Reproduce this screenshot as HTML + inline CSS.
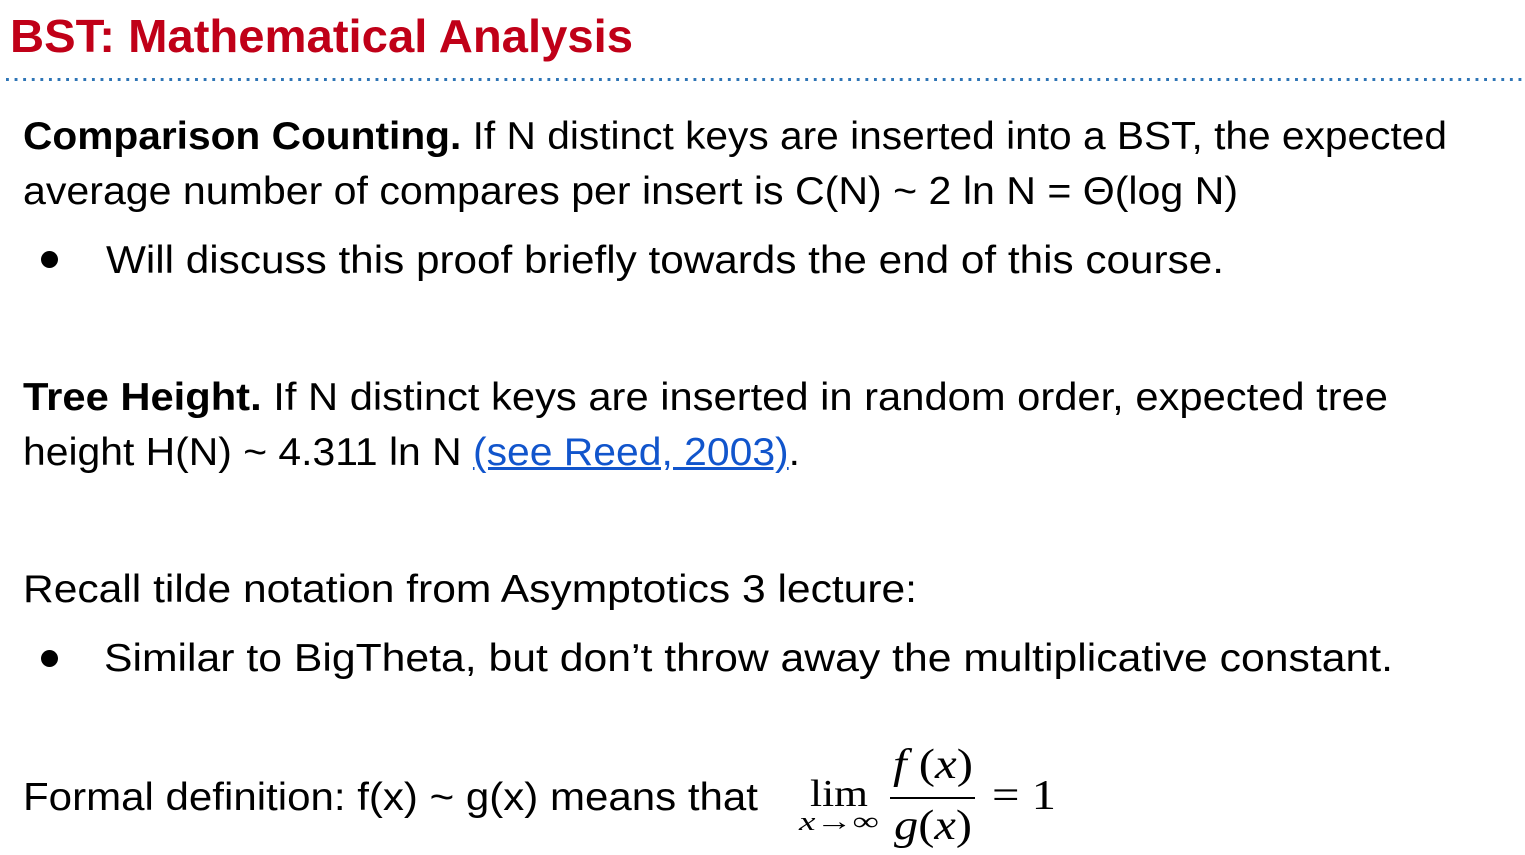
<!DOCTYPE html>
<html><head><meta charset="utf-8">
<style>
html,body{margin:0;padding:0;background:#fff;width:1525px;height:855px;overflow:hidden}
body{position:relative;font-family:"Liberation Sans",sans-serif;color:#000}
.l{position:absolute;white-space:nowrap;font-size:39px;line-height:39px;transform-origin:0 0}
.t{color:#c00018;font-weight:bold;font-size:46px;line-height:46px}
.dots{position:absolute;left:6px;top:78px;width:1519px;height:3px;
background-image:linear-gradient(90deg,#2e75b6 3px,transparent 3px);background-size:8.6px 3px}
.bul{position:absolute;width:17px;height:17px;border-radius:50%;background:#000}
a{color:#1155cc;text-decoration:underline}
.m{position:absolute;font-family:"Liberation Serif",serif;white-space:nowrap;transform-origin:0 0}
</style></head><body>
<div class="l t" data-w="623" style="left:10px;top:13px">BST: Mathematical Analysis</div>
<div class="dots"></div>
<div class="l" data-w="1424" style="left:23px;top:117px"><b>Comparison Counting.</b> If N distinct keys are inserted into a BST, the expected</div>
<div class="l" data-w="1215" style="left:23px;top:172px">average number of compares per insert is C(N) ~ 2 ln N = Θ(log N)</div>
<div class="bul" style="left:41px;top:251px"></div>
<div class="l" data-w="1118" style="left:106px;top:241px">Will discuss this proof briefly towards the end of this course.</div>
<div class="l" data-w="1365" style="left:23px;top:378px"><b>Tree Height.</b> If N distinct keys are inserted in random order, expected tree</div>
<div class="l" data-w="777" style="left:23px;top:433px">height H(N) ~ 4.311 ln N <a>(see Reed, 2003)</a>.</div>
<div class="l" data-w="894" style="left:23px;top:570px">Recall tilde notation from Asymptotics 3 lecture:</div>
<div class="bul" style="left:41px;top:650px"></div>
<div class="l" data-w="1289" style="left:104px;top:639px">Similar to BigTheta, but don’t throw away the multiplicative constant.</div>
<div class="l" data-w="735" style="left:23px;top:778px">Formal definition: f(x) ~ g(x) means that</div>
<div class="m" data-w="58" style="left:810px;top:775px;font-size:38px;line-height:38px">lim</div>
<div class="m" data-w="80" style="left:799px;top:809px;font-size:26px;line-height:26px"><i>x</i>→∞</div>
<div class="m" data-w="80" style="left:893px;top:744px;font-size:42px;line-height:42px"><i>f</i> (<i>x</i>)</div>
<div style="position:absolute;left:890px;top:797px;width:85px;height:2px;background:#000"></div>
<div class="m" data-w="78" style="left:894px;top:805px;font-size:42px;line-height:42px"><i>g</i>(<i>x</i>)</div>
<div class="m" data-w="64" style="left:992px;top:775px;font-size:42px;line-height:42px">= 1</div>
<script>
document.querySelectorAll('[data-w]').forEach(function(e){
var w=e.getBoundingClientRect().width;var t=+e.getAttribute('data-w');
if(w>0)e.style.transform='scaleX('+(t/w)+')';});
</script>
</body></html>
